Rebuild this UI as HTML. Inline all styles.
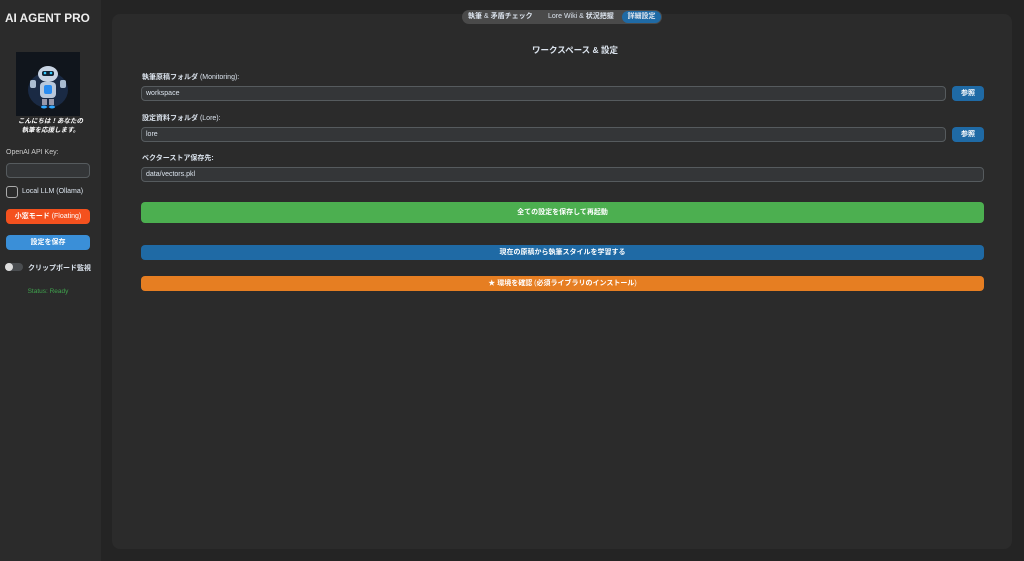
<!DOCTYPE html>
<html><head><meta charset="utf-8"><style>
*{box-sizing:border-box;margin:0;padding:0}
body{width:1024px;height:561px;background:#242424;font-family:"Liberation Sans","Noto Sans CJK JP",sans-serif;color:#dce4ee;position:relative;overflow:hidden;font-size:8px}
.sb{position:absolute;left:0;top:0;width:101px;height:561px;background:#2b2b2b}
.a{position:absolute}
.card{position:absolute;left:112px;top:14px;width:900px;height:535px;background:#2b2b2b;border-radius:8px}
.inp{position:absolute;background:#343638;border:1px solid #565b5e;border-radius:4px;color:#dce4ee;font-size:7px;padding-left:4px;line-height:14px}
.btn{position:absolute;border-radius:4px;color:#fff;font-weight:bold;font-size:7px;text-align:center}
.lbl{position:absolute;left:142px;font-size:7px;font-weight:bold}
.lbl span{font-weight:normal}
</style></head><body>
<div class="sb">
<div class="a" style="left:5px;top:11px;font-size:11.8px;font-weight:bold;color:#eee">AI AGENT PRO</div>
<div class="a" style="left:16px;top:52px;width:64px;height:64px;background:#10151c">
<svg width="64" height="64"><ellipse cx="32" cy="38" rx="20" ry="18" fill="#1a2a44"/><ellipse cx="32" cy="22" rx="10" ry="8" fill="#c8d4e4"/><rect x="26" y="19" width="12" height="5" rx="2" fill="#123"/><circle cx="29" cy="21" r="1.3" fill="#3cf"/><circle cx="35" cy="21" r="1.3" fill="#3cf"/><rect x="24" y="30" width="16" height="16" rx="4" fill="#b8c8dc"/><rect x="28" y="33" width="8" height="9" rx="2" fill="#2a8cf0"/><rect x="14" y="28" width="6" height="8" rx="2" fill="#aabcd0"/><rect x="44" y="28" width="6" height="8" rx="2" fill="#aabcd0"/><rect x="26" y="47" width="5" height="6" fill="#99a"/><rect x="33" y="47" width="5" height="6" fill="#99a"/><ellipse cx="28" cy="55" rx="3" ry="1.5" fill="#3af"/><ellipse cx="36" cy="55" rx="3" ry="1.5" fill="#3af"/></svg></div>
<div class="a" style="left:0;width:101px;top:117px;text-align:center;font-size:6.5px;font-weight:bold;font-style:italic;line-height:9px;color:#fff">こんにちは！あなたの<br>執筆を応援します。</div>
<div class="a" style="left:6px;top:149px;font-size:7px;color:#ccc">OpenAI API Key:</div>
<div class="inp" style="left:6px;top:163px;width:84px;height:15px"></div>
<div class="a" style="left:6px;top:186px;width:12px;height:12px;border:1.5px solid #aaa;border-radius:3px"></div>
<div class="a" style="left:22px;top:188px;font-size:7px">Local LLM (Ollama)</div>
<div class="btn" style="left:6px;top:209px;width:84px;height:15px;line-height:15px;background:#f4511e">小窓モード <span style="font-weight:normal">(Floating)</span></div>
<div class="btn" style="left:6px;top:235px;width:84px;height:15px;line-height:15px;background:#3a8fd8">設定を保存</div>
<div class="a" style="left:5px;top:263px;width:18px;height:8px;border-radius:4px;background:#4a4d50"></div>
<div class="a" style="left:5px;top:263px;width:8px;height:8px;border-radius:4px;background:#ddd"></div>
<div class="a" style="left:28px;top:263px;font-size:7px;font-weight:bold">クリップボード監視</div>
<div class="a" style="left:0;width:96px;top:288px;text-align:center;font-size:6.5px;color:#3fa34d">Status: Ready</div>
</div>
<div class="card"></div>
<div class="a" style="left:462px;top:10px;width:200px;height:14px;background:#4a4a4a;border-radius:7px"></div>
<div class="a" style="left:468px;top:12px;font-size:7px;font-weight:bold;line-height:10px">執筆 <span style="font-weight:normal">&amp;</span> 矛盾チェック</div>
<div class="a" style="left:548px;top:12px;font-size:7px;line-height:10px">Lore Wiki &amp; <b>状況把握</b></div>
<div class="a" style="left:622px;top:11px;width:39px;height:12px;background:#1f6aa5;border-radius:6px;font-size:7px;font-weight:bold;text-align:center;line-height:12px">詳細設定</div>
<div class="a" style="left:112px;width:926px;top:44px;text-align:center;font-size:8.5px;font-weight:bold">ワークスペース &amp; 設定</div>
<div class="lbl" style="top:72px">執筆原稿フォルダ <span>(Monitoring):</span></div>
<div class="inp" style="left:141px;top:86px;width:805px;height:15px">workspace</div>
<div class="btn" style="left:952px;top:86px;width:32px;height:15px;line-height:15px;background:#1f6aa5">参照</div>
<div class="lbl" style="top:113px">設定資料フォルダ <span>(Lore):</span></div>
<div class="inp" style="left:141px;top:127px;width:805px;height:15px">lore</div>
<div class="btn" style="left:952px;top:127px;width:32px;height:15px;line-height:15px;background:#1f6aa5">参照</div>
<div class="lbl" style="top:153px">ベクターストア保存先:</div>
<div class="inp" style="left:141px;top:167px;width:843px;height:15px">data/vectors.pkl</div>
<div class="btn" style="left:141px;top:202px;width:843px;height:21px;line-height:21px;background:#4caf50">全ての設定を保存して再起動</div>
<div class="btn" style="left:141px;top:245px;width:843px;height:15px;line-height:15px;background:#1f6aa5">現在の原稿から執筆スタイルを学習する</div>
<div class="btn" style="left:141px;top:276px;width:843px;height:15px;line-height:15px;background:#e67e22">★ 環境を確認 <span style="font-weight:normal">(</span>必須ライブラリのインストール<span style="font-weight:normal">)</span></div>
</body></html>
